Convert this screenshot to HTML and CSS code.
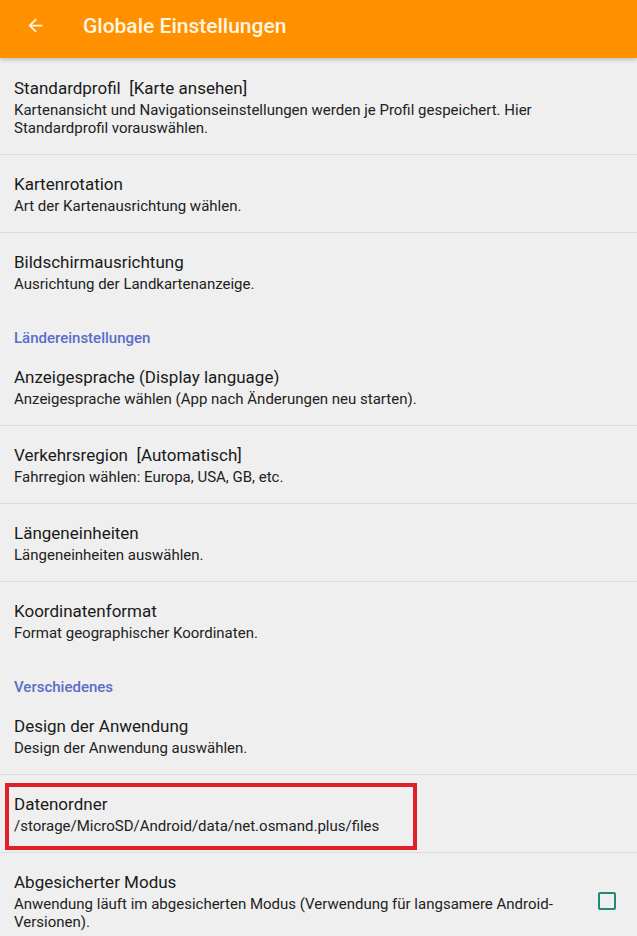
FILE: index.html
```html
<!DOCTYPE html>
<html lang="de">
<head>
    <meta charset="UTF-8">
    <meta name="viewport" content="width=device-width, initial-scale=1.0">
    <title>Globale Einstellungen</title>
    <link rel="stylesheet" href="styles.css">
</head>
<body>
    <header class="toolbar">
        <button class="back" aria-label="Zurück">
            <svg width="21" height="21" viewBox="0 0 24 24">
                <path d="M20 11H7.83l5.59-5.59L12 4l-8 8 8 8 1.41-1.41L7.83 13H20v-2z" fill="currentColor"/>
            </svg>
        </button>
        <h1>Globale Einstellungen</h1>
    </header>

    <ul class="prefs">
        <li class="pref first">
            <div class="pref-title">Standardprofil&nbsp; [Karte ansehen]</div>
            <div class="pref-summary">Kartenansicht und Navigationseinstellungen werden je Profil gespeichert. Hier Standardprofil vorauswählen.</div>
        </li>
        <li class="pref">
            <div class="pref-title">Kartenrotation</div>
            <div class="pref-summary">Art der Kartenausrichtung wählen.</div>
        </li>
        <li class="pref last">
            <div class="pref-title">Bildschirmausrichtung</div>
            <div class="pref-summary">Ausrichtung der Landkartenanzeige.</div>
        </li>

        <li class="category">Ländereinstellungen</li>
        <li class="pref">
            <div class="pref-title">Anzeigesprache (Display language)</div>
            <div class="pref-summary">Anzeigesprache wählen (App nach Änderungen neu starten).</div>
        </li>
        <li class="pref">
            <div class="pref-title">Verkehrsregion&nbsp; [Automatisch]</div>
            <div class="pref-summary">Fahrregion wählen: Europa, USA, GB, etc.</div>
        </li>
        <li class="pref">
            <div class="pref-title">Längeneinheiten</div>
            <div class="pref-summary">Längeneinheiten auswählen.</div>
        </li>
        <li class="pref last">
            <div class="pref-title">Koordinatenformat</div>
            <div class="pref-summary">Format geographischer Koordinaten.</div>
        </li>

        <li class="category">Verschiedenes</li>
        <li class="pref">
            <div class="pref-title">Design der Anwendung</div>
            <div class="pref-summary">Design der Anwendung auswählen.</div>
        </li>
        <li class="pref marked">
            <div class="pref-title">Datenordner</div>
            <div class="pref-summary">/storage/MicroSD/Android/data/net.osmand.plus/files</div>
        </li>
        <li class="pref with-check last">
            <div class="pref-text">
                <div class="pref-title">Abgesicherter Modus</div>
                <div class="pref-summary">Anwendung läuft im abgesicherten Modus (Verwendung für langsamere Android-Versionen).</div>
            </div>
            <span class="checkbox"></span>
        </li>
    </ul>
</body>
</html>
```

FILE: styles.css
```css
body {
    font-family: Roboto, "Noto Sans", Arial, sans-serif;
    background: #efefef;
    color: #1e1e1e;
    margin: 0;
    padding: 0;
}
.toolbar {
    height: 58px;
    background: #ff9000;
    display: flex;
    align-items: center;
    box-shadow: 0 2px 4px rgba(0, 0, 0, 0.2);
    position: relative;
}
.back {
    background: none;
    border: none;
    color: #fff6e2;
    padding: 0;
    margin-left: 25px;
    width: 21px;
    height: 21px;
    display: flex;
    margin-top: -7px;
}
.toolbar h1 {
    margin: -7px 0 0 37px;
    font-size: 21px;
    font-weight: 500;
    color: #fff6e2;
}
.prefs {
    list-style: none;
    margin: 0;
    padding: 0;
}
.pref {
    padding: 18px 14px 17px 14px;
    border-bottom: 1px solid #dcdcdc;
}
.pref.first {
    padding-top: 19px;
}
.pref.last {
    border-bottom: none;
}
.pref-title {
    font-size: 17px;
    line-height: 22px;
    color: #1a1a1a;
}
.pref-summary {
    font-size: 15px;
    line-height: 18px;
    margin-top: 2px;
    color: #222;
}
.category {
    padding: 18px 14px 0 14px;
    font-size: 15px;
    line-height: 20px;
    font-weight: 500;
    color: #5a6dc8;
}
.pref.marked {
    position: relative;
}
.pref.marked::before {
    content: "";
    position: absolute;
    left: 5px;
    top: 8px;
    width: 412px;
    height: 67px;
    border: 4px solid #e01f2b;
    box-sizing: border-box;
}
.pref.with-check {
    display: flex;
    align-items: center;
    gap: 30px;
    padding-right: 21px;
}
.pref-text {
    flex: 1;
}
.checkbox {
    width: 18px;
    height: 18px;
    border: 2px solid #1f8a78;
    border-radius: 2px;
    box-sizing: border-box;
    flex-shrink: 0;
}
```
